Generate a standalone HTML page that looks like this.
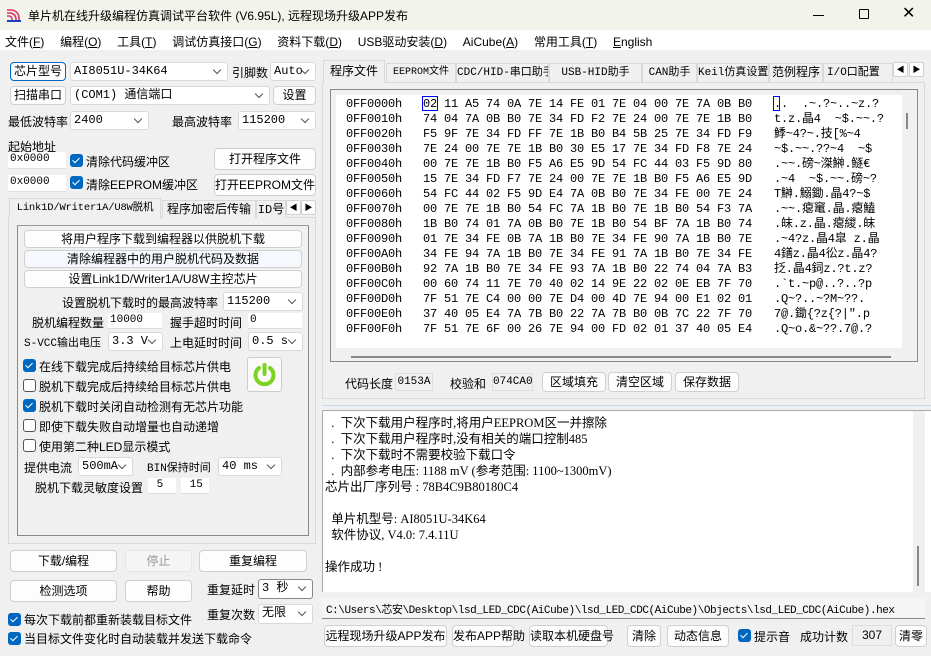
<!DOCTYPE html>
<html><head><meta charset="utf-8"><style>
*{box-sizing:border-box;margin:0;padding:0}
body{width:931px;height:656px;overflow:hidden;background:#f0f0f0;font-family:"Liberation Sans","Noto Sans CJK SC",sans-serif;font-size:12px;color:#000;position:relative}
.a{position:absolute;white-space:nowrap}
.b{position:absolute;background:#fdfdfd;border:1px solid #d0d0d0;border-radius:4px;text-align:center;font-size:12px;line-height:17px;white-space:nowrap}
.c{position:absolute;background:#fff;border:1px solid #d9d9d9;border-radius:3px;font-size:12px;line-height:16px;padding-left:3px;white-space:nowrap;font-family:"Liberation Mono","Noto Sans CJK SC",monospace}
.c:after{content:"";position:absolute;right:7px;top:4px;width:5px;height:5px;border-right:1px solid #555;border-bottom:1px solid #555;transform:rotate(45deg)}
.i{position:absolute;background:#fff;border-bottom:1px solid #ddd;font-family:"Liberation Mono",monospace;font-size:11px;line-height:15px;padding-left:2px}
.k{position:absolute;width:13px;height:13px;border-radius:3px;background:#0067c0}
.k:after{content:"";position:absolute;left:4px;top:2px;width:3px;height:6px;border-right:1.5px solid #fff;border-bottom:1.5px solid #fff;transform:rotate(45deg)}
.u{position:absolute;width:13px;height:13px;border-radius:3px;border:1px solid #555;background:#fff}
.hx{position:absolute;font-family:"Liberation Mono",monospace;font-size:12px;letter-spacing:-0.2px;line-height:15px;white-space:pre;color:#000}
.tab{position:absolute;top:63px;height:19px;border:1px solid #d9d9d9;border-bottom:none;background:#f0f0f0;font-size:12px;line-height:18px;text-align:center;white-space:nowrap;overflow:hidden;font-family:"Liberation Mono","Noto Sans CJK SC",monospace}
</style></head><body>
<!-- title bar -->
<div class="a" style="left:0;top:0;width:931px;height:30px;background:#f2f4ec"></div>
<svg class="a" style="left:6px;top:7px" width="16" height="16" viewBox="0 0 16 16"><path d="M1 3h4a8 8 0 0 1 8 8v2M1 6h3a6 6 0 0 1 6 6v1M1 9h2a3 3 0 0 1 3 3v1" stroke="#e0306a" stroke-width="1.6" fill="none"/><path d="M1 14h14" stroke="#1a40c0" stroke-width="2"/></svg>
<div class="a" style="left:28px;top:7px;font-size:12px">单片机在线升级编程仿真调试平台软件 (V6.95L), 远程现场升级APP发布</div>
<div class="a" style="left:813px;top:15px;width:11px;height:1px;background:#000"></div>
<div class="a" style="left:859px;top:9px;width:10px;height:10px;border:1px solid #000;border-radius:1px"></div>
<div class="a" style="left:902px;top:6px;font-size:16px;line-height:16px">✕</div>
<!-- menu -->
<div class="a" style="left:0;top:30px;width:931px;height:20px;background:#fff"></div>
<div class="a" style="left:5px;top:33px;font-size:12px;word-spacing:0.6px">文件(<u>F</u>)&nbsp;&nbsp;&nbsp; 编程(<u>O</u>)&nbsp;&nbsp;&nbsp; 工具(<u>T</u>)&nbsp;&nbsp;&nbsp; 调试仿真接口(<u>G</u>)&nbsp;&nbsp;&nbsp; 资料下载(<u>D</u>)&nbsp;&nbsp;&nbsp; USB驱动安装(<u>D</u>)&nbsp;&nbsp;&nbsp; AiCube(<u>A</u>)&nbsp;&nbsp;&nbsp; 常用工具(<u>T</u>)&nbsp;&nbsp;&nbsp; <u>E</u>nglish</div>

<!-- left top -->
<div class="b" style="left:10px;top:62px;width:56px;height:19px;border:1.5px solid #0067c0">芯片型号</div>
<div class="c" style="left:70px;top:62px;width:158px;height:19px">AI8051U-34K64</div>
<div class="a" style="left:232px;top:64px">引脚数</div>
<div class="c" style="left:270px;top:62px;width:46px;height:19px">Auto</div>
<div class="b" style="left:10px;top:86px;width:56px;height:19px">扫描串口</div>
<div class="c" style="left:70px;top:86px;width:200px;height:19px">(COM1) 通信端口</div>
<div class="b" style="left:273px;top:86px;width:43px;height:19px">设置</div>
<div class="a" style="left:8px;top:113px">最低波特率</div>
<div class="c" style="left:70px;top:111px;width:79px;height:19px">2400</div>
<div class="a" style="left:172px;top:113px">最高波特率</div>
<div class="c" style="left:238px;top:111px;width:78px;height:19px">115200</div>
<div class="a" style="left:8px;top:138px">起始地址</div>
<div class="i" style="left:8px;top:152px;width:58px;height:17px">0x0000</div>
<div class="k" style="left:70px;top:154px"></div>
<div class="a" style="left:86px;top:153px">清除代码缓冲区</div>
<div class="b" style="left:214px;top:148px;width:102px;height:22px;line-height:20px">打开程序文件</div>
<div class="i" style="left:8px;top:175px;width:58px;height:17px">0x0000</div>
<div class="k" style="left:70px;top:176px"></div>
<div class="a" style="left:86px;top:176px">清除EEPROM缓冲区</div>
<div class="b" style="left:214px;top:174px;width:102px;height:22px;line-height:20px">打开EEPROM文件</div>
<!-- left tabs -->
<div class="a" style="left:8px;top:217px;width:308px;height:327px;border:1px solid #d9d9d9;background:#f0f0f0"></div>
<div class="tab" style="left:9px;top:198px;width:152px;height:20px;background:#f0f0f0;font-size:10.5px;letter-spacing:-0.2px">Link1D/Writer1A/U8W脱机</div>
<div class="tab" style="left:162px;top:200px;width:94px;height:18px">程序加密后传输</div>
<div class="tab" style="left:256px;top:200px;width:30px;height:18px">ID号</div>
<div class="b" style="left:286px;top:200px;width:15px;height:15px;line-height:13px;font-size:8px;border-radius:2px">◀</div>
<div class="b" style="left:301px;top:200px;width:15px;height:15px;line-height:13px;font-size:8px;border-radius:2px">▶</div>
<div class="a" style="left:17px;top:225px;width:292px;height:311px;border:1px solid #888;border-top-color:#999"></div>
<div class="b" style="left:24px;top:230px;width:278px;height:18px;line-height:16px">将用户程序下载到编程器以供脱机下载</div>
<div class="b" style="left:24px;top:250px;width:278px;height:18px;line-height:16px;background:#f5f8fc">清除编程器中的用户脱机代码及数据</div>
<div class="b" style="left:24px;top:270px;width:278px;height:18px;line-height:16px">设置Link1D/Writer1A/U8W主控芯片</div>
<div class="a" style="left:62px;top:294px">设置脱机下载时的最高波特率</div>
<div class="c" style="left:223px;top:292px;width:80px;height:19px">115200</div>
<div class="a" style="left:32px;top:314px">脱机编程数量</div>
<div class="i" style="left:108px;top:313px;width:54px;height:16px">10000</div>
<div class="a" style="left:170px;top:314px">握手超时时间</div>
<div class="i" style="left:248px;top:313px;width:54px;height:16px">0</div>
<div class="a" style="left:24px;top:334px;font-family:'Liberation Mono','Noto Sans CJK SC',monospace;font-size:11px">S-VCC输出电压</div>
<div class="c" style="left:108px;top:332px;width:55px;height:19px">3.3 V</div>
<div class="a" style="left:170px;top:334px">上电延时时间</div>
<div class="c" style="left:248px;top:332px;width:55px;height:19px">0.5 s</div>
<div class="k" style="left:23px;top:359px"></div><div class="a" style="left:39px;top:358px">在线下载完成后持续给目标芯片供电</div>
<div class="u" style="left:23px;top:379px"></div><div class="a" style="left:39px;top:378px">脱机下载完成后持续给目标芯片供电</div>
<div class="k" style="left:23px;top:399px"></div><div class="a" style="left:39px;top:398px">脱机下载时关闭自动检测有无芯片功能</div>
<div class="u" style="left:23px;top:419px"></div><div class="a" style="left:39px;top:418px">即使下载失败自动增量也自动递增</div>
<div class="u" style="left:23px;top:439px"></div><div class="a" style="left:39px;top:438px">使用第二种LED显示模式</div>
<div class="a" style="left:247px;top:357px;width:35px;height:35px;border:1px solid #ccc;border-radius:3px;background:#fafafa"></div>
<svg class="a" style="left:249px;top:359px" width="31" height="31" viewBox="0 0 31 31"><path d="M10 9a9 9 0 1 0 11 0" stroke="#7ed321" stroke-width="4" fill="none" stroke-linecap="round"/><path d="M15.5 6v9" stroke="#7ed321" stroke-width="4" stroke-linecap="round"/></svg>
<div class="a" style="left:24px;top:459px">提供电流</div>
<div class="c" style="left:78px;top:457px;width:55px;height:19px">500mA</div>
<div class="a" style="left:147px;top:459px;font-family:'Liberation Mono','Noto Sans CJK SC',monospace;font-size:11px">BIN保持时间</div>
<div class="c" style="left:218px;top:457px;width:64px;height:19px">40 ms</div>
<div class="a" style="left:35px;top:479px">脱机下载灵敏度设置</div>
<div class="i" style="left:148px;top:478px;width:28px;height:16px">&nbsp;5</div>
<div class="i" style="left:181px;top:478px;width:28px;height:16px">&nbsp;15</div>
<!-- bottom-left -->
<div class="b" style="left:10px;top:550px;width:107px;height:22px;line-height:20px">下载/编程</div>
<div class="b" style="left:125px;top:550px;width:67px;height:22px;line-height:20px;color:#999;background:#f5f5f5;border-color:#e5e5e5">停止</div>
<div class="b" style="left:199px;top:550px;width:108px;height:22px;line-height:20px">重复编程</div>
<div class="b" style="left:10px;top:580px;width:107px;height:22px;line-height:20px">检测选项</div>
<div class="b" style="left:125px;top:580px;width:67px;height:22px;line-height:20px">帮助</div>
<div class="a" style="left:207px;top:581px">重复延时</div>
<div class="c" style="left:258px;top:579px;width:55px;height:20px;border-color:#888">3 秒</div>
<div class="a" style="left:207px;top:606px">重复次数</div>
<div class="c" style="left:258px;top:604px;width:55px;height:20px">无限</div>
<div class="k" style="left:8px;top:613px"></div><div class="a" style="left:24px;top:611px">每次下载前都重新装载目标文件</div>
<div class="k" style="left:8px;top:632px"></div><div class="a" style="left:24px;top:630px">当目标文件变化时自动装载并发送下载命令</div>

<!-- right tabs -->
<div class="a" style="left:322px;top:82px;width:603px;height:317px;border:1px solid #d9d9d9;background:#f0f0f0"></div>
<div class="tab" style="left:323px;top:60px;width:62px;height:23px;background:#f0f0f0;line-height:22px">程序文件</div>
<div class="tab" style="left:386px;width:70px;font-size:10px">EEPROM文件</div>
<div class="tab" style="left:456px;width:93px;font-size:11px">CDC/HID-串口助手</div>
<div class="tab" style="left:549px;width:93px;font-size:11px">USB-HID助手</div>
<div class="tab" style="left:642px;width:55px;font-size:11px">CAN助手</div>
<div class="tab" style="left:697px;width:72px;font-size:11px">Keil仿真设置</div>
<div class="tab" style="left:769px;width:54px">范例程序</div>
<div class="tab" style="left:823px;width:70px;font-size:11px;text-align:left;padding-left:3px">I/O口配置</div>
<div class="b" style="left:893px;top:62px;width:15px;height:15px;line-height:13px;font-size:8px;border-radius:2px">◀</div>
<div class="b" style="left:909px;top:62px;width:15px;height:15px;line-height:13px;font-size:8px;border-radius:2px">▶</div>
<div class="a" style="left:330px;top:89px;width:588px;height:273px;border:1px solid #888;background:#f0f0f0"></div>
<div class="a" style="left:336px;top:95px;width:566px;height:253px;background:#fff"></div>
<div class="a" style="left:903px;top:95px;width:12px;height:253px;background:#f0f0f0"></div>
<div class="a" style="left:906px;top:113px;width:2px;height:16px;background:#888"></div>
<div class="a" style="left:351px;top:356px;width:540px;height:2px;background:#888"></div>
<div class="hx" style="left:346px;top:97px">0FF0000h
0FF0010h
0FF0020h
0FF0030h
0FF0040h
0FF0050h
0FF0060h
0FF0070h
0FF0080h
0FF0090h
0FF00A0h
0FF00B0h
0FF00C0h
0FF00D0h
0FF00E0h
0FF00F0h</div>
<div class="hx" style="left:423px;top:97px">02 11 A5 74 0A 7E 14 FE 01 7E 04 00 7E 7A 0B B0
74 04 7A 0B B0 7E 34 FD F2 7E 24 00 7E 7E 1B B0
F5 9F 7E 34 FD FF 7E 1B B0 B4 5B 25 7E 34 FD F9
7E 24 00 7E 7E 1B B0 30 E5 17 7E 34 FD F8 7E 24
00 7E 7E 1B B0 F5 A6 E5 9D 54 FC 44 03 F5 9D 80
15 7E 34 FD F7 7E 24 00 7E 7E 1B B0 F5 A6 E5 9D
54 FC 44 02 F5 9D E4 7A 0B B0 7E 34 FE 00 7E 24
00 7E 7E 1B B0 54 FC 7A 1B B0 7E 1B B0 54 F3 7A
1B B0 74 01 7A 0B B0 7E 1B B0 54 BF 7A 1B B0 74
01 7E 34 FE 0B 7A 1B B0 7E 34 FE 90 7A 1B B0 7E
34 FE 94 7A 1B B0 7E 34 FE 91 7A 1B B0 7E 34 FE
92 7A 1B B0 7E 34 FE 93 7A 1B B0 22 74 04 7A B3
00 60 74 11 7E 70 40 02 14 9E 22 02 0E EB 7F 70
7F 51 7E C4 00 00 7E D4 00 4D 7E 94 00 E1 02 01
37 40 05 E4 7A 7B B0 22 7A 7B B0 0B 7C 22 7F 70
7F 51 7E 6F 00 26 7E 94 00 FD 02 01 37 40 05 E4</div>
<div class="a" style="left:422px;top:96px;width:16px;height:15px;border:1px solid #0000ff"></div>
<div class="a" style="left:773px;top:96px;width:7px;height:15px;border:1px solid #0000ff"></div>
<div class="hx" style="left:774px;top:97px;font-family:'Liberation Mono','Noto Sans CJK SC',monospace">..  .~.?~..~z.?
t.z.晶4  ~$.~~.?
鯚~4?~.技[%~4
~$.~~.??~4  ~$
.~~.磅~滐鰰.鱁€
.~4  ~$.~~.磅~?
T鰰.鰯鋤.晶4?~$
.~~.瘪竃.晶.瘪鰪
.皌.z.晶.瘪緵.皌
.~4?z.晶4皐 z.晶
4鐥z.晶4彸z.晶4?
抸.晶4鉰z.?t.z?
.`t.~p@..?..?p
.Q~?..~?M~??.
7@.鋤{?z{?|".p
.Q~o.&~??.7@.?</div>
<div class="a" style="left:345px;top:375px">代码长度</div>
<div class="a" style="left:395px;top:373px;width:38px;height:18px;background:#f0f0f0;border:1px solid #ddd;font-family:'Liberation Mono';font-size:11px;line-height:16px;text-align:center">0153A</div>
<div class="a" style="left:450px;top:375px">校验和</div>
<div class="a" style="left:492px;top:373px;width:41px;height:18px;background:#f0f0f0;border:1px solid #ddd;font-family:'Liberation Mono';font-size:11px;line-height:16px;text-align:center">074CA0</div>
<div class="b" style="left:542px;top:372px;width:64px;height:20px;line-height:18px">区域填充</div>
<div class="b" style="left:608px;top:372px;width:64px;height:20px;line-height:18px">清空区域</div>
<div class="b" style="left:675px;top:372px;width:64px;height:20px;line-height:18px">保存数据</div>
<div class="a" style="left:322px;top:405px;width:609px;height:1px;background:#c8dced"></div>
<!-- log -->
<div class="a" style="left:322px;top:410px;width:609px;height:182px;background:#fff;border-top:1px solid #aaa;border-left:1px solid #aaa"></div>
<div class="a" style="left:913px;top:411px;width:12px;height:181px;background:#f0f0f0"></div>
<div class="a" style="left:917px;top:546px;width:2px;height:40px;background:#888"></div>
<div class="a" style="left:325px;top:415px;font-size:12.5px;line-height:16px;white-space:pre;font-family:'Liberation Serif','Noto Sans CJK SC',serif">  .  下次下载用户程序时,将用户EEPROM区一并擦除
  .  下次下载用户程序时,没有相关的端口控制485
  .  下次下载时不需要校验下载口令
  .  内部参考电压: 1188 mV (参考范围: 1100~1300mV)
芯片出厂序列号 : 78B4C9B80180C4

  单片机型号: AI8051U-34K64
  软件协议, V4.0: 7.4.11U

操作成功 !</div>
<div class="a" style="left:322px;top:598px;width:603px;height:21px;background:#f5f5f5;border-bottom:1px solid #888"></div>
<div class="a" style="left:326px;top:601px;font-family:'Liberation Mono','Noto Sans CJK SC',monospace;font-size:11px;letter-spacing:-0.45px">C:\Users\芯安\Desktop\lsd_LED_CDC(AiCube)\lsd_LED_CDC(AiCube)\Objects\lsd_LED_CDC(AiCube).hex</div>
<div class="b" style="left:324px;top:625px;width:123px;height:22px;line-height:20px">远程现场升级APP发布</div>
<div class="b" style="left:452px;top:625px;width:62px;height:22px;line-height:20px">发布APP帮助</div>
<div class="b" style="left:529px;top:625px;width:79px;height:22px;line-height:20px">读取本机硬盘号</div>
<div class="b" style="left:627px;top:625px;width:34px;height:22px;line-height:20px">清除</div>
<div class="b" style="left:667px;top:625px;width:62px;height:22px;line-height:20px">动态信息</div>
<div class="k" style="left:738px;top:629px"></div>
<div class="a" style="left:754px;top:628px">提示音</div>
<div class="a" style="left:800px;top:628px">成功计数</div>
<div class="a" style="left:852px;top:625px;width:40px;height:21px;background:#f0f0f0;border:1px solid #ddd;text-align:center;line-height:19px">307</div>
<div class="b" style="left:895px;top:625px;width:32px;height:22px;line-height:20px">清零</div>
</body></html>
